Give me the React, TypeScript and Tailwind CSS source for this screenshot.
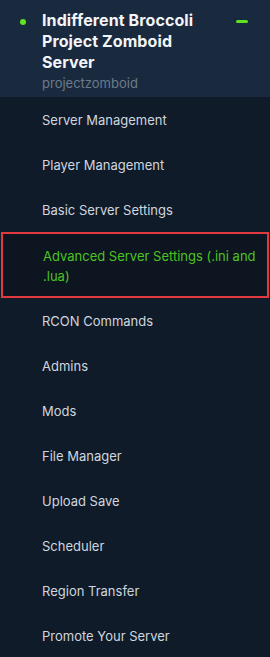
const items = [
  "Server Management",
  "Player Management",
  "Basic Server Settings",
  "Advanced Server Settings (.ini and .lua)",
  "RCON Commands",
  "Admins",
  "Mods",
  "File Manager",
  "Upload Save",
  "Scheduler",
  "Region Transfer",
  "Promote Your Server",
];

const ACTIVE = "Advanced Server Settings (.ini and .lua)";

const App = () => {
  return (
    <div
      className="w-[270px] h-[657px] overflow-hidden bg-[#0f1b29]"
      style={{ fontFamily: "Inter, 'Noto Sans', sans-serif" }}
    >
      <div className="relative h-[97px] bg-[#1a2a3e] pl-[42px] pt-[10px]">
        <span className="absolute left-[20px] top-[19px] w-[6px] h-[6px] rounded-full bg-[#5fe322]"></span>
        <span className="absolute left-[236px] top-[20px] w-[12px] h-[3px] rounded-sm bg-[#5fe322]"></span>
        <p className="w-[165px] text-[16px] leading-[21px] font-bold text-[#f3f5f8] tracking-[0.1px]">
          Indifferent Broccoli Project Zomboid Server
        </p>
        <p className="text-[13px] leading-[20px] text-[#6c7a8b]">projectzomboid</p>
      </div>

      <ul className="flex flex-col">
        {items.map((item) =>
          item === ACTIVE ? (
            <li
              key={item}
              className="mx-px border-2 border-[#e2393f] bg-[#0c1520] pl-[40px] pr-2 pt-[12px] pb-[10px] text-[13px] leading-[20px] text-[#4ec320]"
            >
              {item}
            </li>
          ) : (
            <li key={item} className="h-[45px] flex items-center pl-[42px] pt-[2px] text-[13px] text-[#cfd6df]">
              {item}
            </li>
          )
        )}
      </ul>
    </div>
  );
};

export default App;
